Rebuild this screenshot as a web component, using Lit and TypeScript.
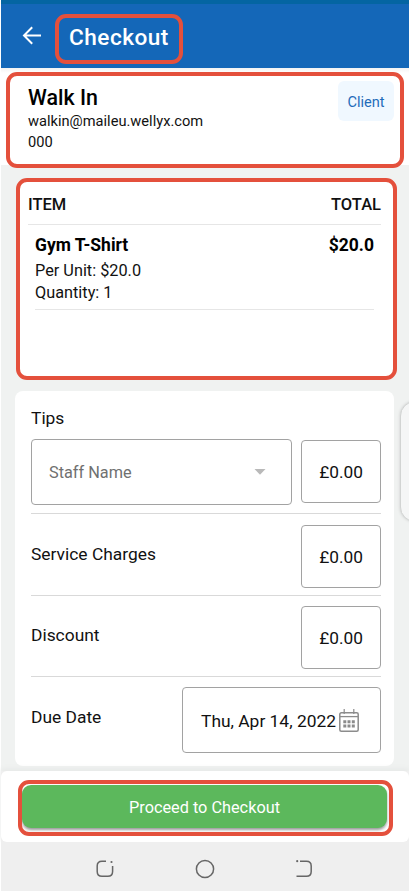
import { LitElement, html, css } from "lit";
import { customElement, property } from "lit/decorators.js";

@customElement("amount-row")
class AmountRow extends LitElement {
  @property() label = "";
  @property() amount = "";

  static styles = css`
    :host { display: flex; justify-content: space-between; box-sizing: border-box; border-bottom: 1px solid #d9d9d9; }
    .label { margin-top: 19px; font-size: 17.4px; line-height: 21px; }
    .amount { box-sizing: border-box; width: 80px; height: 63px; border: 1px solid #a2a2a2; border-radius: 4px; font-size: 17.3px; line-height: 63px; text-align: center; }
  `;

  render() {
    return html`<span class="label">${this.label}</span><span class="amount">${this.amount}</span>`;
  }
}

@customElement("app-root")
class AppRoot extends LitElement {
  static styles = css`
    :host { display: flex; flex-direction: column; box-sizing: border-box; position: relative; width: 409px; height: 891px; padding-left: 1px; overflow: hidden; background: #fff; color: #111; font-family: Roboto, sans-serif; }
    svg { display: block; flex: none; }
    .status { height: 4px; flex: none; background: #0465a2; }
    .header { display: flex; height: 64px; flex: none; box-sizing: border-box; padding: 10px 0 0 21px; background: #1467b8; }
    .back { margin: 11px 12px 0 0; }
    .title { box-sizing: border-box; width: 128px; height: 50px; border: 4px solid #e4503c; border-radius: 11px; padding-left: 10px; font-size: 22.6px; font-weight: 500; line-height: 39px; letter-spacing: 0.5px; color: #fff; }
    .client { position: relative; display: flex; justify-content: space-between; flex: none; height: 97px; box-sizing: border-box; padding: 13px 15px 0 27px; background: linear-gradient(#f2f2f2, #fff 5px); }
    .mark { position: absolute; box-sizing: border-box; border: 4px solid #e4503c; border-radius: 11px; pointer-events: none; }
    .client .mark { left: 5px; top: 4px; width: 398px; height: 96px; z-index: 1; }
    .name { font-size: 21.4px; font-weight: 500; line-height: 33px; margin-bottom: -3px; color: #000; }
    .detail { font-size: 14.65px; line-height: 20.5px; }
    .chip { width: 56px; height: 40px; border-radius: 6px; background: #f0f8ff; color: #1f6cba; font-size: 14.6px; line-height: 42px; text-align: center; }
    .content { position: relative; flex: 1; min-height: 0; box-sizing: border-box; padding: 13px 0 0 14px; background: #f0f2f1; }
    .items { box-sizing: border-box; width: 381px; height: 202px; margin-left: 1px; border: 4px solid #e4503c; border-radius: 11px; padding: 0 12px 0 8px; background: #fff; }
    .cols { display: flex; justify-content: space-between; height: 42px; border-bottom: 1px solid #e6e6e6; font-size: 16.5px; font-weight: 500; line-height: 45px; }
    .item { margin: 0 7px; height: 84px; border-bottom: 1px solid #e6e6e6; font-size: 16.3px; line-height: 22px; }
    .line { display: flex; justify-content: space-between; padding: 9px 0 4px; font-size: 17.5px; font-weight: 700; color: #000; }
    .form { box-sizing: border-box; width: 379px; height: 375px; margin-top: 11px; border-radius: 8px; padding: 17px 13px 0 16px; background: #fff; }
    .label { font-size: 17.4px; line-height: 20px; }
    .tips { display: flex; justify-content: space-between; align-items: flex-start; height: 74px; margin-top: 11px; border-bottom: 1px solid #d9d9d9; }
    .select, .date { display: flex; align-items: center; justify-content: space-between; box-sizing: border-box; height: 66px; border: 1px solid #a2a2a2; border-radius: 4px; }
    .select { width: 261px; padding: 0 25px 0 17px; color: #707070; font-size: 16.3px; }
    .amount { box-sizing: border-box; width: 80px; height: 63px; margin-top: 1px; border: 1px solid #a2a2a2; border-radius: 4px; font-size: 17.3px; line-height: 63px; text-align: center; }
    amount-row { height: 82px; padding-top: 11px; }
    amount-row.short { height: 81px; padding-top: 10px; }
    .due { display: flex; justify-content: space-between; padding-top: 10px; }
    .due .label { margin-top: 20px; }
    .date { width: 199px; padding: 0 21px 0 18px; font-size: 17.4px; line-height: 22px; white-space: nowrap; }
    .date span { padding-top: 1px; }
    .handle { position: absolute; left: 399px; top: 236px; width: 30px; height: 121px; box-sizing: border-box; border: 1px solid #d2d4d3; border-radius: 16px; background: #f5f6f6; box-shadow: 0 0 3px #c8caca; }
    .dock { flex: none; height: 71px; background: #efefef; position: relative; box-shadow: 0 -2px 5px #e6e8e7; }
    .footer { position: relative; box-sizing: border-box; height: 71px; border-radius: 6px; padding: 14px 0 0 21px; background: #fff; }
    .footer .mark { left: 17px; top: 9px; width: 375px; height: 56px; }
    .button { width: 365px; height: 43px; border-radius: 9px; background: #5cb85c; box-shadow: 0 2px 3px #999; color: #fff; font-size: 16.3px; line-height: 45px; text-align: center; }
    .nav { position: relative; display: flex; flex: none; justify-content: space-between; align-items: center; box-sizing: border-box; height: 49px; padding: 4px 95px 0 94px; background: #efefef; }
  `;

  render() {
    return html`
      <div class="status"></div>
      <header class="header">
        <svg class="back" width="21" height="21" viewBox="0 0 21 21" fill="none" stroke="#fff" stroke-width="2"><path d="M19 10.5H2.5M10.2 2.3l-8.2 8.2 8.2 8.2"/></svg>
        <div class="title">Checkout</div>
      </header>
      <section class="client">
        <div><div class="name">Walk In</div><div class="detail">walkin@maileu.wellyx.com</div><div class="detail">000</div></div>
        <div class="chip">Client</div>
        <div class="mark"></div>
      </section>
      <main class="content">
        <section class="items">
          <div class="cols"><span>ITEM</span><span>TOTAL</span></div>
          <div class="item">
            <div class="line"><span>Gym T-Shirt</span><span>$20.0</span></div>
            <div>Per Unit: $20.0</div>
            <div>Quantity: 1</div>
          </div>
        </section>
        <section class="form">
          <div class="label">Tips</div>
          <div class="tips">
            <div class="select"><span>Staff Name</span><svg width="12" height="6" viewBox="0 0 12 6"><path d="M.5 0h11L6 5.7z" fill="#b9b9b9"/></svg></div>
            <div class="amount">£0.00</div>
          </div>
          <amount-row label="Service Charges" amount="£0.00"></amount-row>
          <amount-row class="short" label="Discount" amount="£0.00"></amount-row>
          <div class="due">
            <span class="label">Due Date</span>
            <div class="date"><span>Thu, Apr 14, 2022</span>
              <svg width="20" height="23" viewBox="0 0 20 23" fill="none" stroke="#8c8c8c" stroke-width="1.5"><rect x=".8" y="3.8" width="18.4" height="18.4" rx="1.5"/><path d="M1 7.6h18" stroke-width="1.3"/><path d="M5.2 0v5M14.8 0v5" stroke-width="1.2"/><path stroke-width="3" d="M4.3 12.7h3M8.5 12.7h3M12.8 12.7h3M4.3 17h3M8.5 17h3M12.8 17h3"/></svg>
            </div>
          </div>
        </section>
        <div class="handle"></div>
      </main>
      <div class="dock"><div class="footer"><div class="button">Proceed to Checkout</div><div class="mark"></div></div></div>
      <nav class="nav">
        <svg width="20" height="20" viewBox="0 0 20 20" fill="none" stroke="#666" stroke-width="1.5"><path d="M11 2.2H7Q2.2 2.2 2.2 7v5.5q0 4.8 4.8 4.8h5.8q4.8 0 4.8-4.8V7"/><circle cx="16.5" cy="3" r="1.1" fill="#666" stroke="none"/></svg>
        <svg width="20" height="20" viewBox="0 0 20 20" fill="none" stroke="#666" stroke-width="1.5"><circle cx="10" cy="10" r="8.6"/></svg>
        <svg width="20" height="20" viewBox="0 0 20 20" fill="none" stroke="#666" stroke-width="1.5"><path d="M6 2.2h6.5q4.7 0 4.7 4.8v5.5q0 4.8-4.7 4.8H2.5"/><circle cx="3.2" cy="2.2" r="1.1" fill="#666" stroke="none"/></svg>
      </nav>
    `;
  }
}
